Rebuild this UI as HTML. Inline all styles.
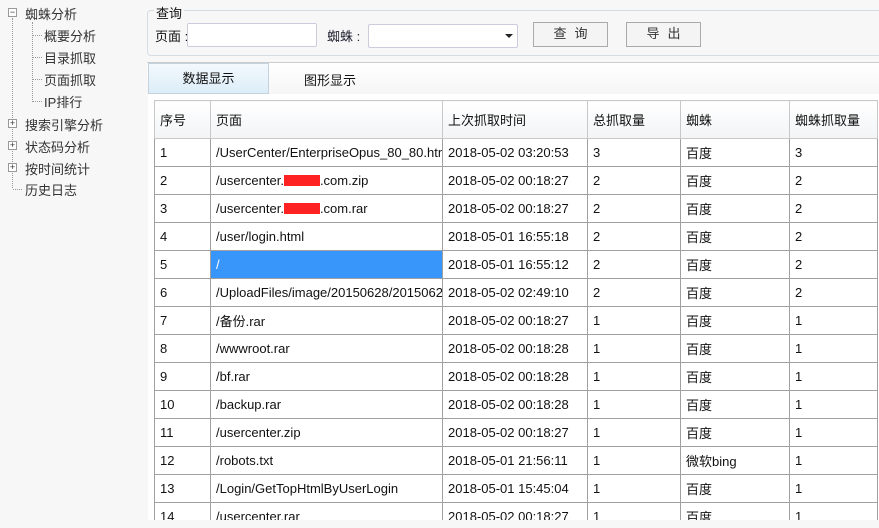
<!DOCTYPE html>
<html><head><meta charset="utf-8"><style>
*{margin:0;padding:0;box-sizing:border-box}
body{width:879px;height:528px;overflow:hidden;background:#f7f7f7;font-family:"Liberation Sans","Noto Sans CJK SC",sans-serif;font-size:13px;color:#111;position:relative}
.a{position:absolute;white-space:nowrap}
.tree{color:#333}
.box{position:absolute;width:9px;height:9px;border:1px solid #999;background:#fff;font-size:9px;line-height:7px;text-align:center;color:#333}
.dv{position:absolute;border-left:1px dotted #999}
.dh{position:absolute;border-top:1px dotted #999}
.btn{position:absolute;border:1px solid #aaa;background:#f4f4f4;text-align:center;line-height:22px;color:#333;letter-spacing:8px;padding-left:8px}
table{border-collapse:collapse;table-layout:fixed;position:absolute;left:0;top:0;width:723px}
td{border:1px solid #a0a0a0;height:28px;padding:0 0 0 5px;white-space:nowrap;overflow:hidden;font-size:13px}
tr.h td{height:38px;background:linear-gradient(#fff,#f2f4f6);border-color:#c8c8c8}
.sel{background:#3896fb;color:#fff}
.red{display:inline-block;width:36px;height:11px;background:#f22;vertical-align:-1px}
</style></head><body>
<div class="box" style="left:8px;top:8px">−</div>
<div class="a tree" style="left:25px;top:4px">蜘蛛分析</div>
<div class="dv" style="left:12px;top:18px;height:170px"></div>
<div class="dv" style="left:32px;top:22px;height:80px"></div>
<div class="dh" style="left:33px;top:35px;width:9px"></div>
<div class="dh" style="left:33px;top:57px;width:9px"></div>
<div class="dh" style="left:33px;top:79px;width:9px"></div>
<div class="dh" style="left:33px;top:101px;width:9px"></div>
<div class="a tree" style="left:44px;top:26px">概要分析</div>
<div class="a tree" style="left:44px;top:48px">目录抓取</div>
<div class="a tree" style="left:44px;top:70px">页面抓取</div>
<div class="a tree" style="left:44px;top:92px">IP排行</div>
<div class="box" style="left:8px;top:119px">+</div>
<div class="a tree" style="left:25px;top:115px">搜索引擎分析</div>
<div class="box" style="left:8px;top:141px">+</div>
<div class="a tree" style="left:25px;top:137px">状态码分析</div>
<div class="box" style="left:8px;top:163px">+</div>
<div class="a tree" style="left:25px;top:159px">按时间统计</div>
<div class="dh" style="left:13px;top:189px;width:9px"></div>
<div class="a tree" style="left:25px;top:180px">历史日志</div>
<div class="a" style="left:147px;top:10px;width:740px;height:46px;border:1px solid #d4dce6;border-radius:4px"></div>
<div class="a" style="left:154px;top:3px;background:#f7f7f7;padding:0 2px">查询</div>
<div class="a" style="left:155px;top:26px">页面 :</div>
<div class="a" style="left:187px;top:23px;width:130px;height:24px;border:1px solid #ccd;background:#fff;border-radius:2px"></div>
<div class="a" style="left:327px;top:26px;color:#223">蜘蛛 :</div>
<div class="a" style="left:368px;top:24px;width:150px;height:24px;border:1px solid #ccd;background:#fff;border-radius:2px"></div>
<div class="a" style="left:505px;top:34px;width:0;height:0;border-left:4px solid transparent;border-right:4px solid transparent;border-top:4px solid #222"></div>
<div class="btn" style="left:533px;top:22px;width:75px;height:25px">查询</div>
<div class="btn" style="left:626px;top:22px;width:75px;height:25px">导出</div>
<div class="a" style="left:147px;top:62px;width:732px;height:1px;background:#ccc"></div>
<div class="a" style="left:147px;top:63px;width:732px;height:31px;background:linear-gradient(#fff,#f6f6f6)"></div>
<div class="a" style="left:148px;top:63px;width:121px;height:31px;background:linear-gradient(#f3f9fd,#dcedf8);border:1px solid #c4d2de;text-align:center;line-height:29px">数据显示</div>
<div class="a" style="left:304px;top:70px">图形显示</div>
<div class="a" style="left:148px;top:94px;width:731px;height:426px;background:#fff"></div>
<div class="a" style="left:154px;top:100px;width:725px;height:420px;overflow:hidden">
<table>
<colgroup><col style="width:56px"><col style="width:232px"><col style="width:145px"><col style="width:93px"><col style="width:109px"><col style="width:88px"></colgroup>
<tr class="h"><td>序号</td><td>页面</td><td>上次抓取时间</td><td>总抓取量</td><td>蜘蛛</td><td>蜘蛛抓取量</td></tr>
<tr><td>1</td><td>/UserCenter/EnterpriseOpus_80_80.htm</td><td>2018-05-02 03:20:53</td><td>3</td><td>百度</td><td>3</td></tr>
<tr><td>2</td><td>/usercenter.<span class="red"></span>.com.zip</td><td>2018-05-02 00:18:27</td><td>2</td><td>百度</td><td>2</td></tr>
<tr><td>3</td><td>/usercenter.<span class="red"></span>.com.rar</td><td>2018-05-02 00:18:27</td><td>2</td><td>百度</td><td>2</td></tr>
<tr><td>4</td><td>/user/login.html</td><td>2018-05-01 16:55:18</td><td>2</td><td>百度</td><td>2</td></tr>
<tr><td>5</td><td class="sel">/</td><td>2018-05-01 16:55:12</td><td>2</td><td>百度</td><td>2</td></tr>
<tr><td>6</td><td>/UploadFiles/image/20150628/20150628</td><td>2018-05-02 02:49:10</td><td>2</td><td>百度</td><td>2</td></tr>
<tr><td>7</td><td>/备份.rar</td><td>2018-05-02 00:18:27</td><td>1</td><td>百度</td><td>1</td></tr>
<tr><td>8</td><td>/wwwroot.rar</td><td>2018-05-02 00:18:28</td><td>1</td><td>百度</td><td>1</td></tr>
<tr><td>9</td><td>/bf.rar</td><td>2018-05-02 00:18:28</td><td>1</td><td>百度</td><td>1</td></tr>
<tr><td>10</td><td>/backup.rar</td><td>2018-05-02 00:18:28</td><td>1</td><td>百度</td><td>1</td></tr>
<tr><td>11</td><td>/usercenter.zip</td><td>2018-05-02 00:18:27</td><td>1</td><td>百度</td><td>1</td></tr>
<tr><td>12</td><td>/robots.txt</td><td>2018-05-01 21:56:11</td><td>1</td><td>微软bing</td><td>1</td></tr>
<tr><td>13</td><td>/Login/GetTopHtmlByUserLogin</td><td>2018-05-01 15:45:04</td><td>1</td><td>百度</td><td>1</td></tr>
<tr><td>14</td><td>/usercenter.rar</td><td>2018-05-02 00:18:27</td><td>1</td><td>百度</td><td>1</td></tr>
</table>
</div>
</body></html>
